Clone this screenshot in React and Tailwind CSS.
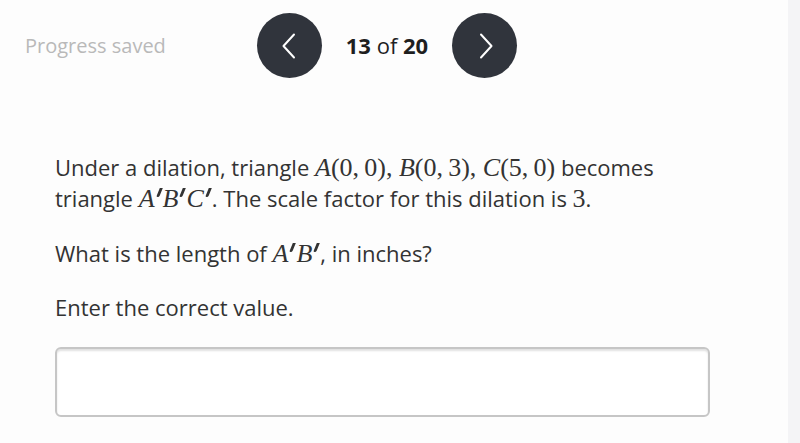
function Chevron({ dir }) {
    return (
        <svg width="16" height="26" viewBox="0 0 16 26" fill="none">
            <path
                d={dir === "left" ? "M13 1.5 L2.5 13 L13 24.5" : "M3 1.5 L13.5 13 L3 24.5"}
                stroke="white"
                strokeWidth="2"
                strokeLinecap="round"
                strokeLinejoin="round"
            />
        </svg>
    );
}

function M({ children }) {
    return <span className="font-['Liberation_Serif',serif] text-[26px] leading-none">{children}</span>;
}

// prime mark, drawn as a slanted tick
function P() {
    return (
        <span className="inline-block relative w-[8px] h-[19px]">
            <span className="absolute left-[3px] top-0 w-[2.5px] h-[9px] bg-[#333333] skew-x-[-22deg] rounded-b-full" />
        </span>
    );
}

export default function App() {
    return (
        <div className="flex w-[800px] h-[443px] bg-[#fdfdfd] font-['Open_Sans',sans-serif] overflow-hidden">
            <div className="flex-1 flex flex-col">
                <div className="flex items-center pt-[13px] pl-[25px]">
                    <div className="w-[232px] text-[20px] text-[#b9b9b9]">Progress saved</div>
                    <button className="w-[65px] h-[65px] rounded-full bg-[#30343c] flex items-center justify-center pr-[2px]">
                        <Chevron dir="left" />
                    </button>
                    <div className="mx-[22px] text-[22px] text-[#1f1f1f] w-[86px] text-center whitespace-nowrap">
                        <span className="font-bold">13</span> of <span className="font-bold">20</span>
                    </div>
                    <button className="w-[65px] h-[65px] rounded-full bg-[#30343c] flex items-center justify-center pl-[2px]">
                        <Chevron dir="right" />
                    </button>
                </div>

                <div className="pl-[55px] mt-[74px] text-[22px] leading-[31px] text-[#333333]">
                    <p className="whitespace-nowrap">
                        Under a dilation, triangle <M><i>A</i>(0,&thinsp;0), <i>B</i>(0,&thinsp;3), <i>C</i>(5,&thinsp;0)</M> becomes
                        <br />
                        triangle <M><i>A</i><P /><i>B</i><P /><i>C</i><P /></M>. The scale factor for this dilation is <M>3</M>.
                    </p>
                    <p className="mt-[24px]">
                        What is the length of <M><i>A</i><P /><i>B</i><P /></M>, in inches?
                    </p>
                    <p className="mt-[23px]">Enter the correct value.</p>
                    <input
                        className="mt-[24px] block w-[655px] h-[70px] rounded-[6px] border-2 border-[#c6c6c6] bg-white shadow-[inset_0_2px_2px_rgba(0,0,0,0.12)] outline-none"
                        type="text"
                    />
                </div>
            </div>
            <div className="w-[12px] bg-[#f4f4f6]" />
        </div>
    );
}
